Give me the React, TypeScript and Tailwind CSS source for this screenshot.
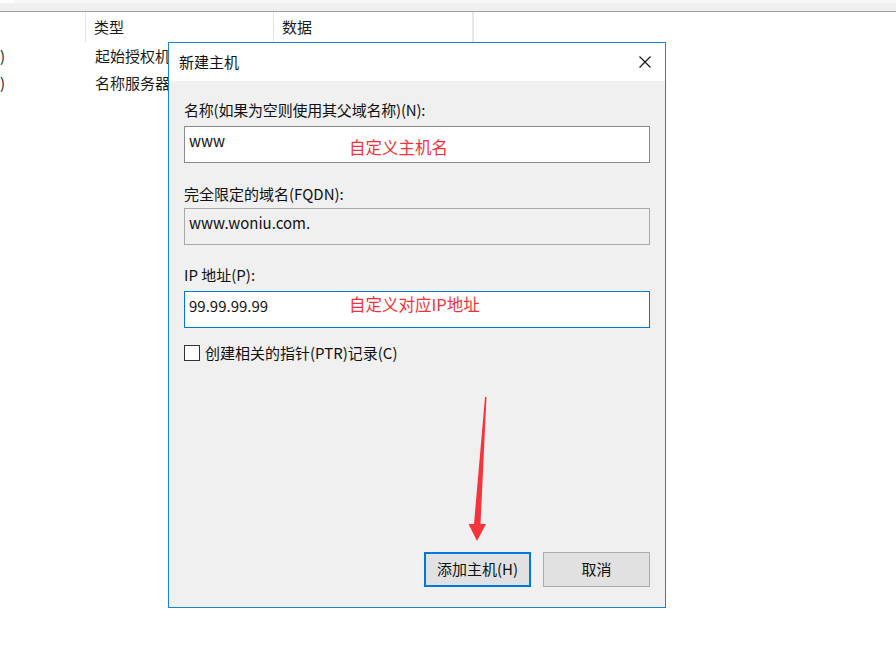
import { useState } from 'react'

const FONT = { fontFamily: '"Noto Sans CJK SC", "Noto Sans", sans-serif' }

function ListHeader() {
  return (
    <div className="flex h-[30px] text-[15px] leading-[30px] text-[#1a1a1a]">
      <div className="w-[86px] shrink-0 border-r border-[#e5e5e5]" />
      <div className="w-[188px] shrink-0 border-r border-[#e5e5e5] pl-[8px]">类型</div>
      <div className="w-[200px] shrink-0 border-r-2 border-[#e8e8e8] pl-[8px]">数据</div>
      <div className="flex-1" />
    </div>
  )
}

// the dialog covers this column from x=168, so the text is clipped there
function ListRow({ type }: { type: string }) {
  return (
    <div className="flex h-[27px] text-[15px] leading-[27px] text-[#1a1a1a]">
      <div className="w-[86px] shrink-0 overflow-hidden whitespace-nowrap">)</div>
      <div className="w-[73px] shrink-0 overflow-hidden whitespace-nowrap ml-[9px]">{type}</div>
    </div>
  )
}

function Field({
  value,
  note,
  readOnly,
  focused,
  noteTop,
}: {
  value: string
  note?: string
  readOnly?: boolean
  focused?: boolean
  noteTop: string
}) {
  return (
    <div
      className={
        'relative h-[37px] w-full border px-[4px] pt-[4px] text-[15px] leading-5 text-[#111] ' +
        (focused
          ? 'border-[#0078d7] bg-white'
          : readOnly
            ? 'border-[#a8a8a8] bg-[#f0f0f0]'
            : 'border-[#8a8a8a] bg-white')
      }
    >
      {value}
      {note && (
        <span
          className={'absolute left-[164px] text-[16.5px] leading-6 text-[#f5323a] ' + noteTop}
        >
          {note}
        </span>
      )}
    </div>
  )
}

function Arrow() {
  return (
    <svg
      className="pointer-events-none absolute left-0 top-0"
      width={498}
      height={566}
      viewBox="0 0 498 566"
    >
      <polygon
        points="316,354 317.5,354 311.5,481 317,481 308,498 299.5,481 305,481"
        fill="#f5343c"
      />
    </svg>
  )
}

function NewHostDialog() {
  const [ptr, setPtr] = useState(false)
  return (
    <div className="absolute left-[168px] top-[42px] flex h-[566px] w-[498px] flex-col border border-[#1883d7] bg-[#f0f0f0]">
      <div className="flex h-[38px] shrink-0 items-center bg-white pl-[10px] pr-[14px] text-[15px] text-[#111]">
        <span className="flex-1">新建主机</span>
        <svg width="12" height="12" viewBox="0 0 12 12">
          <path d="M0.5 0.5 L11.5 11.5 M11.5 0.5 L0.5 11.5" stroke="#111" strokeWidth="1.1" fill="none" />
        </svg>
      </div>

      <div className="flex flex-1 flex-col px-[15px] pb-[20px] pt-[19px] text-[15px] text-[#111]">
        <div className="leading-5 tracking-[-0.2px]">名称(如果为空则使用其父域名称)(N):</div>
        <div className="mt-[6px]">
          <Field value="www" note="自定义主机名" noteTop="top-[8px]" />
        </div>

        <div className="mt-[21px] leading-5">完全限定的域名(FQDN):</div>
        <div className="mt-[4px]">
          <Field value="www.woniu.com." readOnly noteTop="" />
        </div>

        <div className="mt-[20px] leading-5">IP 地址(P):</div>
        <div className="mt-[6px]">
          <Field value="99.99.99.99" note="自定义对应IP地址" focused noteTop="top-[0px]" />
        </div>

        <label className="mt-[15px] flex h-5 items-center gap-[5px] leading-5">
          <span
            onClick={() => setPtr(!ptr)}
            className="h-[16px] w-[16px] shrink-0 border border-[#333] bg-white"
          />
          创建相关的指针(PTR)记录(C)
        </label>

        <div className="mt-auto flex justify-end gap-[12px]">
          <button className="h-[35px] w-[107px] border-2 border-[#0078d7] bg-[#e1e1e1] text-[15px] text-[#111]">
            添加主机(H)
          </button>
          <button className="h-[35px] w-[107px] border border-[#adadad] bg-[#e1e1e1] text-[15px] text-[#111]">
            取消
          </button>
        </div>
      </div>

      <Arrow />
    </div>
  )
}

export default function App() {
  return (
    <div className="relative h-[645px] w-[896px] overflow-hidden bg-white" style={FONT}>
      <div className="flex h-[3px]">
        <div className="w-[14px] bg-white" />
        <div className="flex-1 bg-[#f7f7f7]" />
      </div>
      <div className="h-[8px] bg-[#f0f0f0]" />
      <div className="h-[1px] bg-[#a0a0a0]" />
      <ListHeader />
      <ListRow type="起始授权机构(SOA)" />
      <ListRow type="名称服务器(NS)" />
      <NewHostDialog />
    </div>
  )
}
